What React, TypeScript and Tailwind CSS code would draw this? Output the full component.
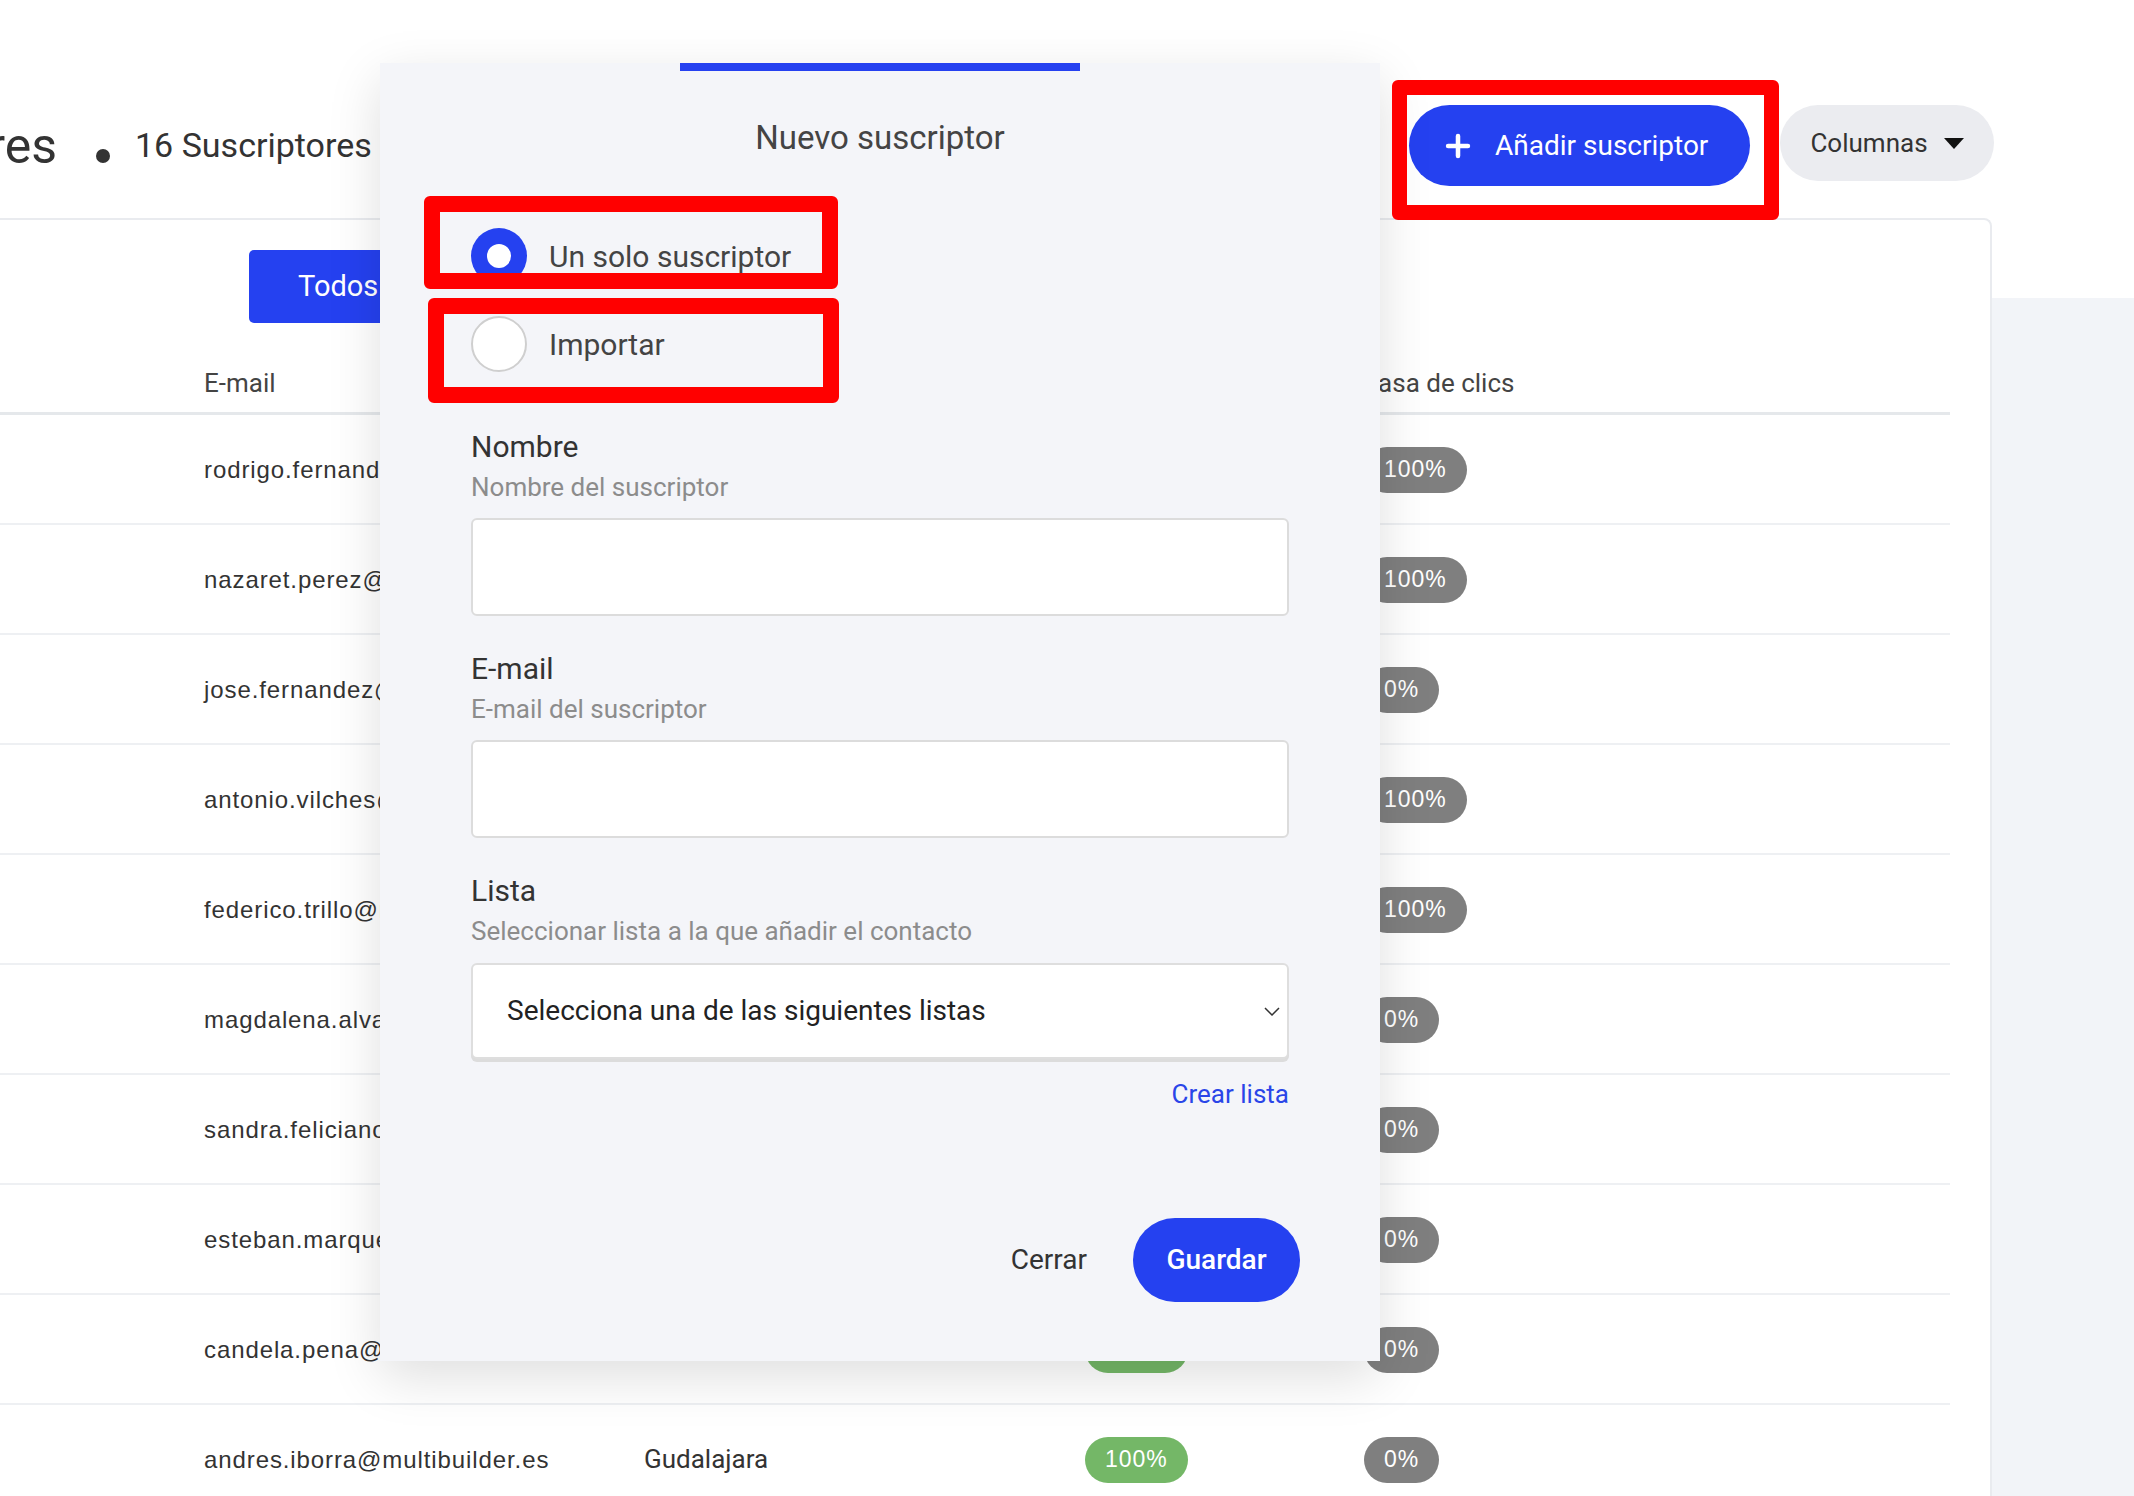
import { Plus } from 'lucide-react';

const rows = [
  { email: 'rodrigo.fernandez@multibuilder.es', city: 'Madrid', open: '100%', clicks: '100%' },
  { email: 'nazaret.perez@multibuilder.es', city: 'Sevilla', open: '100%', clicks: '100%' },
  { email: 'jose.fernandez@multibuilder.es', city: 'Valencia', open: '100%', clicks: '0%' },
  { email: 'antonio.vilches@multibuilder.es', city: 'Granada', open: '100%', clicks: '100%' },
  { email: 'federico.trillo@multibuilder.es', city: 'Murcia', open: '100%', clicks: '100%' },
  { email: 'magdalena.alvarez@multibuilder.es', city: 'Málaga', open: '100%', clicks: '0%' },
  { email: 'sandra.feliciano@multibuilder.es', city: 'Toledo', open: '100%', clicks: '0%' },
  { email: 'esteban.marquez@multibuilder.es', city: 'Cádiz', open: '100%', clicks: '0%' },
  { email: 'candela.pena@multibuilder.es', city: 'Bilbao', open: '100%', clicks: '0%' },
  { email: 'andres.iborra@multibuilder.es', city: 'Gudalajara', open: '100%', clicks: '0%' },
];

const Field = ({ label, hint, first }: { label: string; hint: string; first?: boolean }) => (
  <div className={first ? 'mt-[57px]' : 'mt-[35px]'}>
    <div className="text-[30px] leading-[36px] text-[#333]">{label}</div>
    <div className="mt-[6px] text-[26px] leading-[32px] text-[#8c8c8c]">{hint}</div>
    <div className="mt-[15px] h-[98px] rounded-[6px] border-2 border-[#dcdcdc] bg-white" />
  </div>
);

const NewSubscriberModal = () => (
  <div className="absolute left-[380px] top-[63px] w-[1000px] h-[1298px] bg-[#f4f5f9] shadow-[0_16px_50px_rgba(0,0,0,0.13)] px-[91px] flex flex-col">
    <div className="mx-auto w-[400px] h-[8px] bg-[#2541f0]" />
    <h2 className="mt-[47px] text-center text-[33px] leading-[40px] text-[#444]">Nuevo suscriptor</h2>

    <div className="mt-[70px] flex items-center h-[56px] gap-[22px]">
      <span className="w-[56px] h-[56px] rounded-full bg-[#2541f0] flex items-center justify-center">
        <span className="w-[24px] h-[24px] rounded-full bg-white" />
      </span>
      <span className="text-[30px] text-[#444]">Un solo suscriptor</span>
    </div>
    <div className="mt-[32px] flex items-center h-[56px] gap-[22px]">
      <span className="w-[56px] h-[56px] rounded-full bg-white border-2 border-[#cfcfcf]" />
      <span className="text-[30px] text-[#444]">Importar</span>
    </div>

    <Field first label="Nombre" hint="Nombre del suscriptor" />
    <Field label="E-mail" hint="E-mail del suscriptor" />

    <div className="mt-[35px]">
      <div className="text-[30px] leading-[36px] text-[#333]">Lista</div>
      <div className="mt-[6px] text-[26px] leading-[32px] text-[#8c8c8c]">Seleccionar lista a la que añadir el contacto</div>
      <div className="mt-[16px] h-[96px] rounded-[6px] border-2 border-[#dedede] bg-white shadow-[0_3px_0_#dcdcdc] flex items-center justify-between pl-[34px] pr-[7px]">
        <span className="text-[28px] text-[#222]">Selecciona una de las siguientes listas</span>
        <svg width="16" height="9" viewBox="0 0 16 9" fill="none">
          <polyline points="1,1 8,8 15,1" stroke="#333" strokeWidth="1.5" />
        </svg>
      </div>
    </div>

    <div className="mt-[19px] text-right text-[26px] leading-[32px] text-[#2a45e8]">Crear lista</div>

    <div className="mt-[108px] mr-[-11px] flex items-center justify-end gap-[46px]">
      <span className="text-[28px] text-[#333]">Cerrar</span>
      <button className="w-[167px] h-[84px] rounded-full bg-[#2541f0] text-white text-[28px] font-medium">Guardar</button>
    </div>
  </div>
);

export default function App() {
  return (
    <div className="relative w-[2134px] h-[1496px] overflow-hidden bg-white font-['Roboto',sans-serif] text-[#333]">
      {/* top bar */}
      <header className="h-[218px] flex items-start pt-[105px]">
        <div className="h-[81px] flex items-center">
          <div className="w-[57px] overflow-hidden flex justify-end">
            <span className="whitespace-nowrap text-[50px] leading-none text-[#333]">Suscriptores</span>
          </div>
          <span className="ml-[39px] w-[14px] h-[14px] rounded-full bg-[#333] translate-y-[10px]" />
          <span className="ml-[25px] text-[34px] text-[#333] whitespace-nowrap">16 Suscriptores</span>
        </div>
        <div className="ml-auto mr-[140px] flex items-start gap-[30px]">
          <button className="w-[341px] h-[81px] rounded-full bg-[#2541f0] text-white flex items-center pl-[32px] gap-[20px]">
            <Plus size={34} strokeWidth={3.2} />
            <span className="text-[28px]">Añadir suscriptor</span>
          </button>
          <button className="w-[214px] h-[76px] rounded-full bg-[#ebecf0] flex items-center justify-center gap-[16px]">
            <span className="text-[26px] text-[#333]">Columnas</span>
            <svg width="20" height="11" viewBox="0 0 20 11">
              <polygon points="0,0 20,0 10,11" fill="#111" />
            </svg>
          </button>
        </div>
      </header>

      <div className="flex">
        {/* subscribers card */}
        <section className="w-[1992px] h-[1280px] border-t-2 border-r-2 border-[#e9ebef] rounded-tr-[8px] bg-white pr-[40px]">
          <div className="pt-[30px] pl-[249px] flex">
            <button className="w-[180px] h-[73px] rounded-[5px] bg-[#2541f0] text-white text-[29px] text-left pl-[49px]">Todos</button>
            <button className="ml-[10px] h-[73px] px-[40px] rounded-[5px] bg-[#ebecf0] text-[29px]">Activos</button>
          </div>
          <div className="mt-[29px] h-[63px] pt-[3px] border-b-[3px] border-[#e5e8eb] flex items-center pl-[204px] text-[26px] text-[#444]">
            <div className="w-[440px]">E-mail</div>
            <div className="w-[441px]">Ciudad</div>
            <div className="w-[279px]">Tasa de apertura</div>
            <div className="flex-1">Tasa de clics</div>
          </div>
          {rows.map(r => (
            <div key={r.email} className="h-[110px] pt-[1px] border-b-2 border-[#eef0f3] flex items-center pl-[204px]">
              <div className="w-[440px] font-['Liberation_Sans',Arial,sans-serif] text-[24px] tracking-[0.9px] text-[#333] whitespace-nowrap">
                {r.email}
              </div>
              <div className="w-[441px] text-[26px] text-[#333]">{r.city}</div>
              <div className="w-[279px]">
                <span className="inline-flex h-[46px] items-center rounded-full bg-[#74b767] px-[20px] font-['Liberation_Sans',Arial,sans-serif] text-[23px] tracking-[1px] text-white">
                  {r.open}
                </span>
              </div>
              <div className="flex-1">
                <span className="inline-flex h-[46px] items-center rounded-full bg-[#7f7f7f] px-[20px] font-['Liberation_Sans',Arial,sans-serif] text-[23px] tracking-[1px] text-white">
                  {r.clicks}
                </span>
              </div>
            </div>
          ))}
        </section>
        <div className="flex-1 flex flex-col">
          <div className="h-[80px] bg-white" />
          <div className="flex-1 bg-[#f2f4f8]" />
        </div>
      </div>

      <NewSubscriberModal />

      {/* annotation boxes */}
      <div className="absolute left-[424px] top-[196px] w-[414px] h-[93px] border-[16px] border-[#ff0000] rounded-[6px]" />
      <div className="absolute left-[428px] top-[298px] w-[411px] h-[105px] border-[16px] border-[#ff0000] rounded-[6px]" />
      <div className="absolute left-[1392px] top-[80px] w-[387px] h-[140px] border-[15px] border-[#ff0000] rounded-[6px]" />
    </div>
  );
}
